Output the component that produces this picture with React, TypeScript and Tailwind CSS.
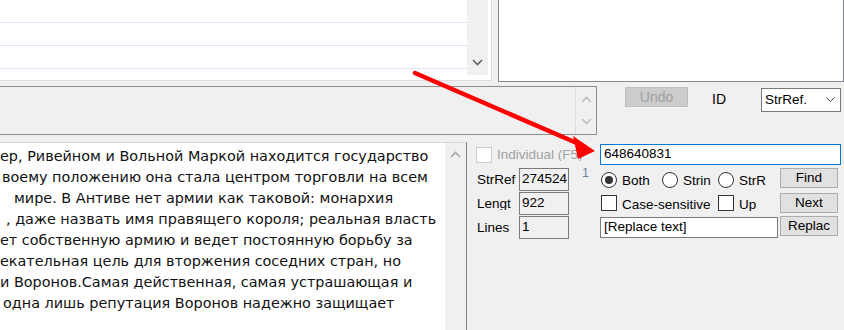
import React from 'react';

const ui = { fontFamily: '"Liberation Sans", Arial, sans-serif' };
const body = { fontFamily: '"DejaVu Sans", Tahoma, sans-serif' };

const Chevron = ({ up = false, color = '#606060' }: { up?: boolean; color?: string }) => (
  <svg width="11" height="7" viewBox="0 0 11 7" className="block">
    <polyline
      points={up ? '1,6 5.5,1.5 10,6' : '1,1 5.5,5.5 10,1'}
      fill="none"
      stroke={color}
      strokeWidth="1.6"
    />
  </svg>
);

const lines: { pad: string; text: string }[] = [
  { pad: 'pl-[0px]', text: 'ер, Ривейном и Вольной Маркой находится государство' },
  { pad: 'pl-[2px]', text: 'воему положению она стала центром торговли на всем' },
  { pad: 'pl-[14px]', text: 'мире. В Антиве нет армии как таковой: монархия' },
  { pad: 'pl-[6px]', text: ', даже назвать имя правящего короля; реальная власть' },
  { pad: 'pl-[0px]', text: 'ет собственную армию и ведет постоянную борьбу за' },
  { pad: 'pl-[0px]', text: 'екательная цель для вторжения соседних стран, но' },
  { pad: 'pl-[0px]', text: 'и Воронов.Самая действенная, самая устрашающая и' },
  { pad: 'pl-[3px]', text: 'одна лишь репутация Воронов надежно защищает' },
];

// labels in the original dialog are clipped at the bottom edge
const Clip = ({ children, className = '' }: { children: React.ReactNode; className?: string }) => (
  <span className={`block shrink-0 h-[14px] overflow-hidden leading-[16px] whitespace-nowrap ${className}`}>{children}</span>
);

const Box = ({ disabled = false }: { disabled?: boolean }) => (
  <span className={`block shrink-0 w-[16px] h-[16px] bg-white border ${disabled ? 'border-[#cccccc]' : 'border-[#333333]'}`} />
);

const Radio = ({ on = false }: { on?: boolean }) => (
  <span className="flex shrink-0 items-center justify-center w-[16px] h-[16px] rounded-full bg-white border border-[#333333]">
    {on && <span className="block w-[8px] h-[8px] rounded-full bg-[#333333]" />}
  </span>
);

const Btn = ({ children, className = '' }: { children: React.ReactNode; className?: string }) => (
  <div className={`flex items-center justify-center w-[58px] h-[20px] bg-[#e1e1e1] border border-[#adadad] text-[13.5px] text-black ${className}`}>
    {children}
  </div>
);

const Field = ({ value }: { value: string }) => (
  <div className="w-[50px] h-[23px] border border-[#7a7a7a] bg-[#f0f0f0] pl-[2px] flex items-center text-[13.5px] text-black">
    {value}
  </div>
);

const App: React.FC = () => {
  return (
    <div className="relative w-[844px] h-[330px] overflow-hidden bg-[#f0f0f0] flex flex-col" style={ui}>
      {/* Top: list + preview box */}
      <div className="flex h-[82px] shrink-0">
        <div className="w-[492px] h-[81px] bg-white border-r border-b border-[#dcdcdc] flex pr-[3px] pb-[5px]">
          <div className="flex-1 flex flex-col">
            <div className="h-[23px] border-b border-[#e3e3f6]" />
            <div className="h-[23px] border-b border-[#e3e3f6]" />
            <div className="h-[23px] border-b border-[#e3e3f6]" />
          </div>
          <div className="w-[21px] bg-[#f0f0f0] flex flex-col justify-end items-center pb-[9px]">
            <Chevron />
          </div>
        </div>
        <div className="ml-[6px] w-[346px] h-[82px] bg-white border-l border-r border-b border-[#828790]" />
      </div>

      {/* Middle row */}
      <div className="flex mt-[4px] h-[49px] shrink-0 items-start">
        <div className="w-[597px] h-[49px] border-t border-r border-b border-[#8c8c8c] flex justify-end">
          <div className="w-[21px] h-full border-l border-[#dedede] flex flex-col items-center justify-between py-[9px]">
            <Chevron up color="#bdbdbd" />
            <Chevron color="#bdbdbd" />
          </div>
        </div>
        <div className="ml-[28px] mt-[1px] w-[63px] h-[20px] bg-[#cccccc] border border-[#bfbfbf] flex items-center justify-center text-[14px] text-[#a0a0a0]">
          Undo
        </div>
        <div className="ml-[24px] w-[49px] h-[24px] mt-[1px] flex items-center text-[14px] text-black">ID</div>
        <div className="w-[80px] h-[24px] mt-[2px] bg-white border border-[#7a7a7a] flex items-center justify-between pl-[3px] pr-[5px] text-[13.5px] text-black">
          <span>StrRef.</span>
          <svg width="9" height="6" viewBox="0 0 9 6">
            <polyline points="0.5,0.5 4.5,4.5 8.5,0.5" fill="none" stroke="#444" strokeWidth="1" />
          </svg>
        </div>
      </div>

      {/* Bottom row */}
      <div className="flex mt-[7px] flex-1 min-h-0">
        <div className="w-[467px] border-t border-[#d5d5d5] border-r-[#828282] border-r flex">
          <div className="flex-1 bg-white pt-[3px] text-[14.4px] leading-[21px] text-[#111]" style={body}>
            {lines.map((l, i) => (
              <div key={i} className={`whitespace-nowrap ${l.pad}`}>{l.text}</div>
            ))}
          </div>
          <div className="w-[21px] bg-[#f0f0f0] flex flex-col items-center pt-[8px]">
            <Chevron up color="#a6a6a6" />
          </div>
        </div>

        {/* Right panel */}
        <div className="flex">
          <div className="w-[133px] pl-[9px] pt-[5px] flex flex-col">
            <div className="flex items-start h-[15px]">
              <Box disabled />
              <Clip className="ml-[5px] text-[13.5px] text-[#a0a0a0]">Individual (F5)</Clip>
            </div>
            <div className="mt-[6px] flex flex-col gap-[1px]">
              {[
                ['StrRef', '274524'],
                ['Lengt', '922'],
                ['Lines', '1'],
              ].map(([label, value], i) => (
                <div key={label} className="flex items-start">
                  <div className="w-[43px] pl-[1px] pt-[4px]">
                    <Clip className="text-[13.5px] text-black">{label}</Clip>
                  </div>
                  <Field value={value} />
                  {i === 0 && <span className="ml-[13px] -mt-[4px] text-[12.5px] text-[#6f7f9f]">1</span>}
                </div>
              ))}
            </div>
          </div>

          <div className="w-[241px] pt-[2px] flex flex-col">
            <div className="h-[21px] bg-white border border-[#0078d7] flex items-center pl-[3px] text-[13.5px] text-black">
              648640831
            </div>
            <div className="mt-[3px] flex items-start">
              <div className="flex items-start w-[180px] pt-[4px] pl-[1px]">
                <div className="flex items-start w-[61px]">
                  <Radio on />
                  <Clip className="ml-[5px] mt-[1px] text-[13.5px] text-black">Both</Clip>
                </div>
                <div className="flex items-start w-[56px]">
                  <Radio />
                  <Clip className="ml-[5px] mt-[1px] text-[13.5px] text-black">Strin</Clip>
                </div>
                <div className="flex items-start">
                  <Radio />
                  <Clip className="ml-[5px] mt-[1px] text-[13.5px] text-black">StrR</Clip>
                </div>
              </div>
              <Btn>Find</Btn>
            </div>
            <div className="mt-[5px] flex items-start">
              <div className="flex items-start w-[180px] pt-[2px] pl-[1px]">
                <div className="flex items-start w-[117px]">
                  <Box />
                  <Clip className="ml-[5px] mt-[2px] text-[13.5px] text-black">Case-sensitive</Clip>
                </div>
                <div className="flex items-start">
                  <Box />
                  <Clip className="ml-[5px] mt-[2px] text-[13.5px] text-black">Up</Clip>
                </div>
              </div>
              <Btn className="h-[19px]">Next</Btn>
            </div>
            <div className="mt-[3px] flex items-start">
              <div className="w-[178px] h-[21px] mt-[1px] bg-white border border-[#7a7a7a] flex items-center pl-[3px] text-[13.5px] text-black">
                [Replace text]
              </div>
              <Btn className="ml-[2px]">Replac</Btn>
            </div>
          </div>
        </div>
      </div>

      {/* red annotation arrow */}
      <svg className="absolute inset-0 pointer-events-none" width="844" height="330">
        <line x1="415" y1="73" x2="579" y2="144" stroke="#ff0000" strokeWidth="4.5" strokeLinecap="round" />
        <polygon points="573,136 595,151 578,159" fill="#ff0000" />
      </svg>
    </div>
  );
};

export default App;
